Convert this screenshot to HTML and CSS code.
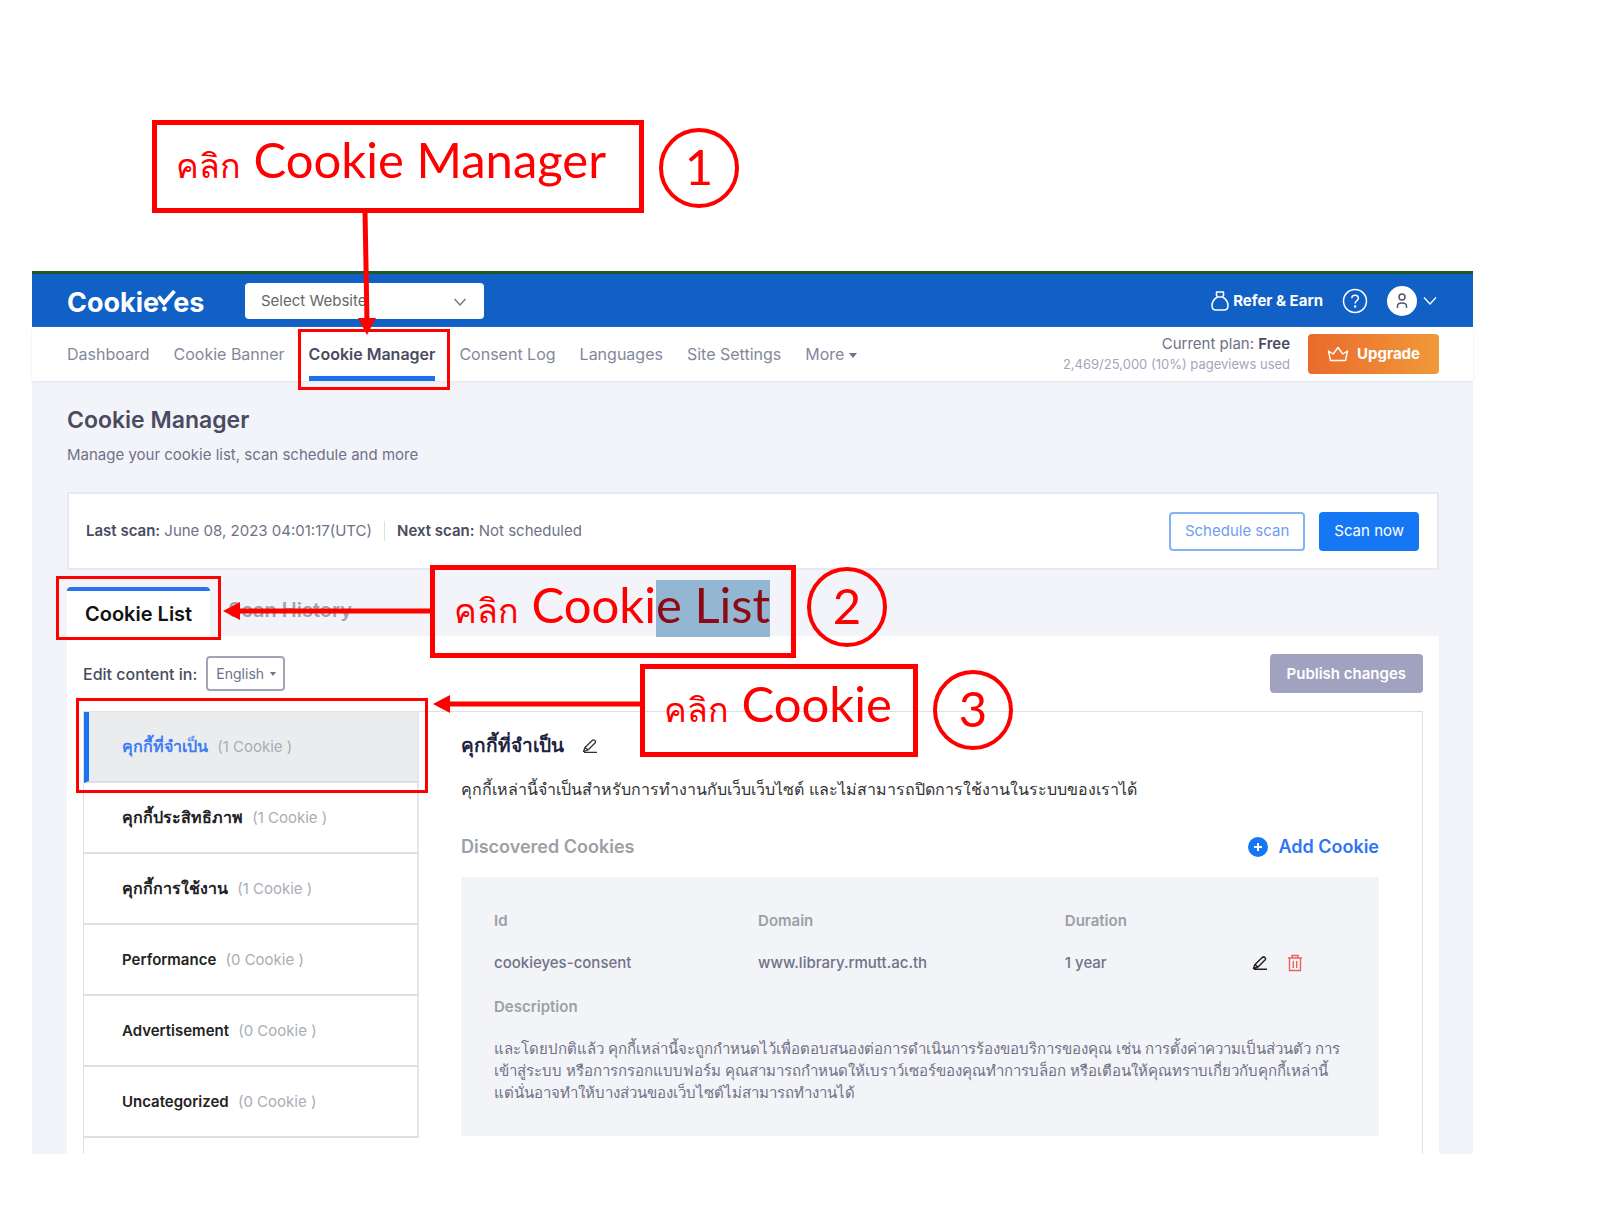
FILE: index.html
```html
<!DOCTYPE html>
<html lang="th">
<head>
    <meta charset="UTF-8">
    <meta name="viewport" content="width=device-width, initial-scale=1.0">
    <title>Cookie Manager</title>
    <link rel="stylesheet" href="styles.css">
</head>
<body>
    <div class="app">
        <header class="topbar">
            <a class="logo" href="#" aria-label="CookieYes">Cookie<svg width="19" height="22" viewBox="0 0 19 22"><path d="M1.500 6.500L7 13L17.500 1" fill="none" stroke="currentColor" stroke-width="3.800"/><circle cx="7.500" cy="19" r="2.400" fill="currentColor"/></svg>es</a>
            <div class="site-select">
                <select aria-label="Select Website">
                    <option>Select Website</option>
                </select>
                <svg width="14" height="10" viewBox="0 0 14 10"><path d="M1.500 2L7 8l5.500-6" fill="none" stroke="#777" stroke-width="1.400"/></svg>
            </div>
            <div class="account">
                <a class="refer" href="#">
                    <svg width="18" height="20" viewBox="0 0 18 20" fill="none" stroke="currentColor" stroke-width="1.500" stroke-linejoin="round"><path d="M5.500 1h7v3.500L11.500 6h-5l-1-1.500zM6.500 6C3 8 1 11 1 14.500C1 17.500 2.500 19 5 19h8c2.500 0 4-1.500 4-4.500C17 11 15 8 11.500 6"/></svg>
                    Refer &amp; Earn
                </a>
                <button class="icon-button" aria-label="Help">
                    <svg width="26" height="26" viewBox="0 0 26 26" fill="none" stroke="#fff" stroke-width="1.500"><circle cx="13" cy="13" r="11.500"/><path d="M9.800 10.300c0-4.300 6.600-4.100 6.600-.2c0 2.700-3.300 2.600-3.300 5.400"/><circle cx="13.100" cy="18.500" r=".5" fill="#fff"/></svg>
                </button>
                <button class="icon-button profile" aria-label="Profile">
                    <svg width="30" height="30" viewBox="0 0 30 30"><circle cx="15" cy="15" r="15" fill="#fff"/><g fill="none" stroke="#55566e" stroke-width="1.500"><circle cx="15" cy="11" r="3"/><path d="M10.500 22v-2c0-2 1.500-3 4.500-3s4.500 1 4.500 3v2"/></g></svg>
                    <svg width="14" height="10" viewBox="0 0 14 10"><path d="M1 1.500L7 8l6-6.500" fill="none" stroke="#fff" stroke-width="1.300"/></svg>
                </button>
            </div>
        </header>

        <nav class="menu">
            <a href="#">Dashboard</a>
            <a href="#">Cookie Banner</a>
            <a href="#" class="active">Cookie Manager</a>
            <a href="#">Consent Log</a>
            <a href="#">Languages</a>
            <a href="#">Site Settings</a>
            <a href="#">More <span class="caret"></span></a>
            <div class="plan">
                <div>Current plan: <strong>Free</strong></div>
                <div class="usage">2,469/25,000 (10%) pageviews used</div>
            </div>
            <button class="upgrade">
                <svg width="22" height="16" viewBox="0 0 22 16" fill="none" stroke="currentColor" stroke-width="1.400" stroke-linejoin="round"><path d="M3.500 14.500L1.500 5l4.700 3L11 1.500L15.800 8l4.700-3l-2 9.500z"/></svg>
                Upgrade
            </button>
        </nav>

        <main class="content">
            <h1>Cookie Manager</h1>
            <p class="subtitle">Manage your cookie list, scan schedule and more</p>

            <section class="scan">
                <div><b>Last scan:</b> June 08, 2023 04:01:17(UTC)</div>
                <div class="next-scan"><b>Next scan:</b> Not scheduled</div>
                <button class="btn btn-outline">Schedule scan</button>
                <button class="btn btn-primary">Scan now</button>
            </section>

            <div class="tabs">
                <button class="tab active">Cookie List</button>
                <button class="tab">Scan History</button>
            </div>

            <section class="panel">
                <div class="toolbar">
                    <label for="language">Edit content in:</label>
                    <div class="language">
                        <select id="language">
                            <option>English</option>
                        </select>
                        <span class="caret"></span>
                    </div>
                    <button class="btn btn-muted">Publish changes</button>
                </div>

                <div class="categories">
                    <div class="category-list">
                        <button class="category active"><b class="thai">คุกกี้ที่จำเป็น</b> (1 Cookie )</button>
                        <button class="category"><b class="thai">คุกกี้ประสิทธิภาพ</b> (1 Cookie )</button>
                        <button class="category"><b class="thai">คุกกี้การใช้งาน</b> (1 Cookie )</button>
                        <button class="category"><b>Performance</b> (0 Cookie )</button>
                        <button class="category"><b>Advertisement</b> (0 Cookie )</button>
                        <button class="category"><b>Uncategorized</b> (0 Cookie )</button>
                    </div>

                    <div class="details">
                        <div class="details-title">
                            <h2>คุกกี้ที่จำเป็น</h2>
                            <button class="icon-button" aria-label="Edit category">
                                <svg width="16" height="16" viewBox="0 0 16 16" fill="none" stroke="#333" stroke-width="1.300" stroke-linejoin="round"><path d="M1.500 13.500l1.500-4L10.500 2.300c1.500-1.200 4 .8 2.700 2.500L6 12zM3 9.500l3 2.500M2 14.300h13"/></svg>
                            </button>
                        </div>
                        <p class="summary">คุกกี้เหล่านี้จำเป็นสำหรับการทำงานกับเว็บเว็บไซต์ และไม่สามารถปิดการใช้งานในระบบของเราได้</p>

                        <div class="discovered">
                            <h3>Discovered Cookies</h3>
                            <button class="add-cookie">
                                <svg width="20" height="20" viewBox="0 0 20 20"><circle cx="10" cy="10" r="10" fill="#1677f5"/><path d="M10 6v8M6 10h8" stroke="#fff" stroke-width="2"/></svg>
                                Add Cookie
                            </button>
                        </div>

                        <div class="cookie-card">
                            <table>
                                <thead>
                                    <tr>
                                        <th class="col-id">Id</th>
                                        <th class="col-domain">Domain</th>
                                        <th class="col-duration">Duration</th>
                                        <th></th>
                                    </tr>
                                </thead>
                                <tbody>
                                    <tr>
                                        <td>cookieyes-consent</td>
                                        <td>www.library.rmutt.ac.th</td>
                                        <td>1 year</td>
                                        <td>
                                            <div class="actions">
                                                <button class="icon-button" aria-label="Edit cookie">
                                                    <svg width="16" height="16" viewBox="0 0 16 16" fill="none" stroke="#222" stroke-width="1.500" stroke-linejoin="round"><path d="M1.500 13.500l1.500-4L10.500 2.300c1.500-1.200 4 .8 2.700 2.500L6 12zM3 9.500l3 2.500M2 14.300h13"/></svg>
                                                </button>
                                                <button class="icon-button" aria-label="Delete cookie">
                                                    <svg width="16" height="18" viewBox="0 0 16 18" fill="none" stroke="#e8645a" stroke-width="1.400"><path d="M1 4h14M5 4V1.500h6V4M2.500 4v12.500h11V4M6.300 7v7M9.700 7v7"/></svg>
                                                </button>
                                            </div>
                                        </td>
                                    </tr>
                                </tbody>
                            </table>
                            <h4>Description</h4>
                            <p>และโดยปกติแล้ว คุกกี้เหล่านี้จะถูกกำหนดไว้เพื่อตอบสนองต่อการดำเนินการร้องขอบริการของคุณ เช่น การตั้งค่าความเป็นส่วนตัว การ<br>เข้าสู่ระบบ หรือการกรอกแบบฟอร์ม คุณสามารถกำหนดให้เบราว์เซอร์ของคุณทำการบล็อก หรือเตือนให้คุณทราบเกี่ยวกับคุกกี้เหล่านี้<br>แต่นั่นอาจทำให้บางส่วนของเว็บไซต์ไม่สามารถทำงานได้</p>
                        </div>
                    </div>
                </div>
            </section>
        </main>
    </div>

    <!-- Step callouts drawn over the page -->
    <svg class="arrows" width="700" height="800" viewBox="0 0 700 800" stroke="#f00" stroke-width="5" fill="#f00">
        <path d="M365 210L367 322"/>
        <path d="M358 318h18l-9 17z" stroke="none"/>
        <path d="M432 611H236"/>
        <path d="M223 611l17-9v18z" stroke="none"/>
        <path d="M642 704H446"/>
        <path d="M433 704l17-9v18z" stroke="none"/>
    </svg>
    <div class="frame frame-menu"></div>
    <div class="frame frame-tab"></div>
    <div class="frame frame-category"></div>

    <div class="callout callout-1"><span class="thai">คลิก</span> Cookie Manager</div>
    <div class="step step-1">1</div>
    <div class="callout callout-2"><span class="thai">คลิก</span> Cooki<mark>e List</mark></div>
    <div class="step step-2">2</div>
    <div class="callout callout-3"><span class="thai">คลิก</span> Cookie</div>
    <div class="step step-3">3</div>
</body>
</html>
```
FILE: styles.css
```css
* {
    box-sizing: border-box;
}
body {
    position: relative;
    margin: 0;
    padding: 271px 127px 77px 32px;
    background-color: #fff;
    color: #6f7187;
    font-family: Inter, sans-serif;
    font-size: 15px;
    line-height: 20px;
}
h1, h2, h3, h4, p {
    margin: 0;
}
a {
    color: inherit;
    text-decoration: none;
}
button, select {
    font: inherit;
    color: inherit;
    margin: 0;
    cursor: pointer;
}
b, strong {
    font-weight: 600;
    color: #4a4b60;
}
svg {
    flex-shrink: 0;
}
.app {
    background-color: #f3f4fa;
    border-top: 3px solid #1f5a26;
}
.icon-button {
    display: flex;
    align-items: center;
    padding: 0;
    border: none;
    background: none;
}
.caret {
    display: inline-block;
    border: 4px solid transparent;
    border-top: 5px solid #6f7187;
    border-bottom: none;
    vertical-align: middle;
}

/* Top bar */
.topbar {
    display: flex;
    align-items: center;
    height: 53px;
    padding: 0 36px 0 35px;
    background-color: #1160c6;
    color: #fff;
}
.logo {
    width: 178px;
    padding-top: 4px;
    font-size: 27px;
    font-weight: 700;
    line-height: 32px;
}
.logo svg {
    margin: 0 -3px 0 -2px;
    vertical-align: 0;
}
.site-select {
    position: relative;
    width: 239px;
}
.site-select select {
    width: 100%;
    height: 36px;
    padding: 0 16px;
    border: none;
    border-radius: 4px;
    background-color: #fff;
    color: #666;
    appearance: none;
}
.site-select svg {
    position: absolute;
    right: 17px;
    top: 14px;
    pointer-events: none;
}
.account {
    display: flex;
    align-items: center;
    gap: 19px;
    margin-left: auto;
}
.refer {
    display: flex;
    align-items: center;
    gap: 4px;
    font-weight: 700;
}
.profile {
    gap: 6px;
}

/* Menu */
.menu {
    display: flex;
    align-items: center;
    gap: 24px;
    height: 54px;
    padding: 0 34px 0 35px;
    background-color: #fff;
    box-shadow: 0 1px 2px #e4e5ee;
}
.menu a {
    height: 54px;
    border-bottom: 5px solid transparent;
    font-size: 16px;
    line-height: 54px;
    white-space: nowrap;
    color: #85879b;
}
.menu a.active {
    border-bottom-color: #1a73e8;
    color: #4a4b60;
    font-weight: 600;
}
.plan {
    margin-left: auto;
    text-align: right;
    white-space: nowrap;
}
.usage {
    font-size: 13px;
    color: #a4a6b8;
}
.upgrade {
    display: flex;
    align-items: center;
    gap: 8px;
    height: 40px;
    margin-left: -6px;
    padding: 0 19px;
    border: none;
    border-radius: 4px;
    background: linear-gradient(90deg, #ea6a2c, #f09a3a);
    color: #fff;
    font-weight: 700;
}

/* Content */
.content {
    padding: 23px 34px 0 35px;
}
h1 {
    font-size: 23px;
    line-height: 32px;
    font-weight: 600;
    color: #4a4b60;
}
.subtitle {
    margin: 9px 0 27px;
}
.scan {
    display: flex;
    align-items: center;
    height: 78px;
    padding: 0 18px 0 17px;
    background-color: #fff;
    border: 2px solid #e8e9f0;
}
.next-scan {
    margin-left: 12px;
    padding-left: 12px;
    border-left: 1px solid #dcdde8;
}
.btn {
    height: 39px;
    padding: 0 14px;
    border: 1px solid transparent;
    border-radius: 4px;
}
.btn-outline {
    margin-left: auto;
    border: 2px solid #85b2f7;
    background-color: #fff;
    color: #6f9df0;
}
.btn-primary {
    margin-left: 14px;
    background-color: #1677f5;
    color: #fff;
}
.btn-muted {
    margin-left: auto;
    padding: 0 16px;
    background-color: #a1a2bf;
    color: #fff;
    font-weight: 600;
}

.tabs {
    display: flex;
    margin-top: 17px;
}
.tab {
    height: 49px;
    padding: 0 18px 8px;
    border: none;
    border-top: 4px solid transparent;
    background: none;
    font-size: 20px;
    font-weight: 600;
    color: #a0a3ab;
}
.tab.active {
    padding-bottom: 0;
    border-top-color: #2b73ee;
    border-radius: 4px 4px 0 0;
    background-color: #fff;
    color: #111;
}

.panel {
    padding: 18px 16px 0;
    background-color: #fff;
}
.toolbar {
    display: flex;
    align-items: center;
    gap: 9px;
    margin-bottom: 18px;
}
.toolbar label {
    font-size: 16px;
    font-weight: 500;
    color: #4a4b60;
}
.language {
    position: relative;
}
.language select {
    width: 79px;
    height: 35px;
    padding: 0 8px;
    border: 2px solid #a3a4b5;
    border-radius: 4px;
    background-color: #fff;
    font-size: 14px;
    appearance: none;
}
.language .caret {
    position: absolute;
    right: 9px;
    top: 16px;
    border-width: 4px 3px 0;
}

.categories {
    display: flex;
    border: 1px solid #dddfe8;
    border-bottom: none;
}
.category-list {
    flex: 0 0 335px;
    padding-bottom: 16px;
}
.category {
    display: block;
    width: 100%;
    height: 71px;
    padding: 0 38px;
    border: none;
    border-right: 2px solid #e4e5ee;
    border-bottom: 2px solid #dddfe8;
    background-color: #fff;
    color: #a9adb5;
    text-align: left;
}
.category b {
    margin-right: 5px;
    color: #222;
}
.category .thai {
    font-size: 16px;
}
.category.active {
    border-left: 5px solid #1a73f0;
    padding-left: 33px;
    background-color: #ebecee;
}
.category.active b {
    color: #3d7df5;
}

.details {
    flex: 1;
    min-width: 0;
    padding: 22px 43px 0 42px;
}
.details-title {
    display: flex;
    align-items: center;
    gap: 18px;
}
h2 {
    font-size: 19px;
    line-height: 24px;
    font-weight: 600;
    color: #1d2340;
}
.summary {
    margin: 18px 0 33px;
    font-size: 16px;
    line-height: 26px;
    color: #333;
}
.discovered {
    display: flex;
    justify-content: space-between;
    margin-bottom: 18px;
}
h3 {
    font-size: 18px;
    line-height: 24px;
    font-weight: 600;
    color: #9ba0a6;
}
.add-cookie {
    display: flex;
    align-items: center;
    gap: 10px;
    padding: 0;
    border: none;
    background: none;
    font-size: 18px;
    font-weight: 600;
    color: #2f74f5;
}
.cookie-card {
    padding: 34px 33px 32px;
    background-color: #f3f4f7;
}
table {
    width: 100%;
    table-layout: fixed;
    border-collapse: collapse;
}
th, td {
    padding: 0;
    text-align: left;
}
th, h4 {
    font-size: 15px;
    font-weight: 600;
    color: #9ba0a6;
}
th {
    height: 20px;
}
td {
    height: 64px;
    font-weight: 500;
}
h4 {
    margin-top: 2px;
}
.col-id {
    width: 31%;
}
.col-domain {
    width: 36%;
}
.col-duration {
    width: 22%;
}
.actions {
    display: flex;
    gap: 19px;
}
.cookie-card p {
    margin-top: 21px;
    font-size: 15px;
    font-weight: 500;
    line-height: 22px;
    white-space: nowrap;
}

/* Callouts */
.arrows {
    position: absolute;
    left: 0;
    top: 0;
    pointer-events: none;
}
.frame, .callout, .step {
    position: absolute;
    color: #f00;
    border: 3px solid #f00;
}
.frame-menu {
    left: 298px;
    top: 329px;
    width: 152px;
    height: 61px;
}
.frame-tab {
    left: 56px;
    top: 576px;
    width: 165px;
    height: 64px;
}
.frame-category {
    left: 76px;
    top: 698px;
    width: 352px;
    height: 95px;
}
.callout, .step {
    font-family: Lato, sans-serif;
    font-size: 49px;
    line-height: 57px;
    white-space: nowrap;
}
.callout {
    height: 93px;
    padding: 6px 19px;
    border-width: 5px;
}
.callout .thai {
    font-size: 34px;
    font-weight: 300;
}
.callout mark {
    display: inline-block;
    padding-bottom: 8px;
    background-color: #93b6d3;
    color: #8b0a14;
    line-height: 49px;
}
.step {
    width: 80px;
    height: 80px;
    border-width: 4px;
    border-radius: 50%;
    line-height: 68px;
    text-align: center;
}
.callout-1 {
    left: 152px;
    top: 120px;
    width: 492px;
}
.step-1 {
    left: 659px;
    top: 128px;
}
.callout-2 {
    left: 430px;
    top: 565px;
    width: 366px;
}
.step-2 {
    left: 807px;
    top: 567px;
}
.callout-3 {
    left: 640px;
    top: 664px;
    width: 278px;
}
.step-3 {
    left: 933px;
    top: 670px;
}
```
